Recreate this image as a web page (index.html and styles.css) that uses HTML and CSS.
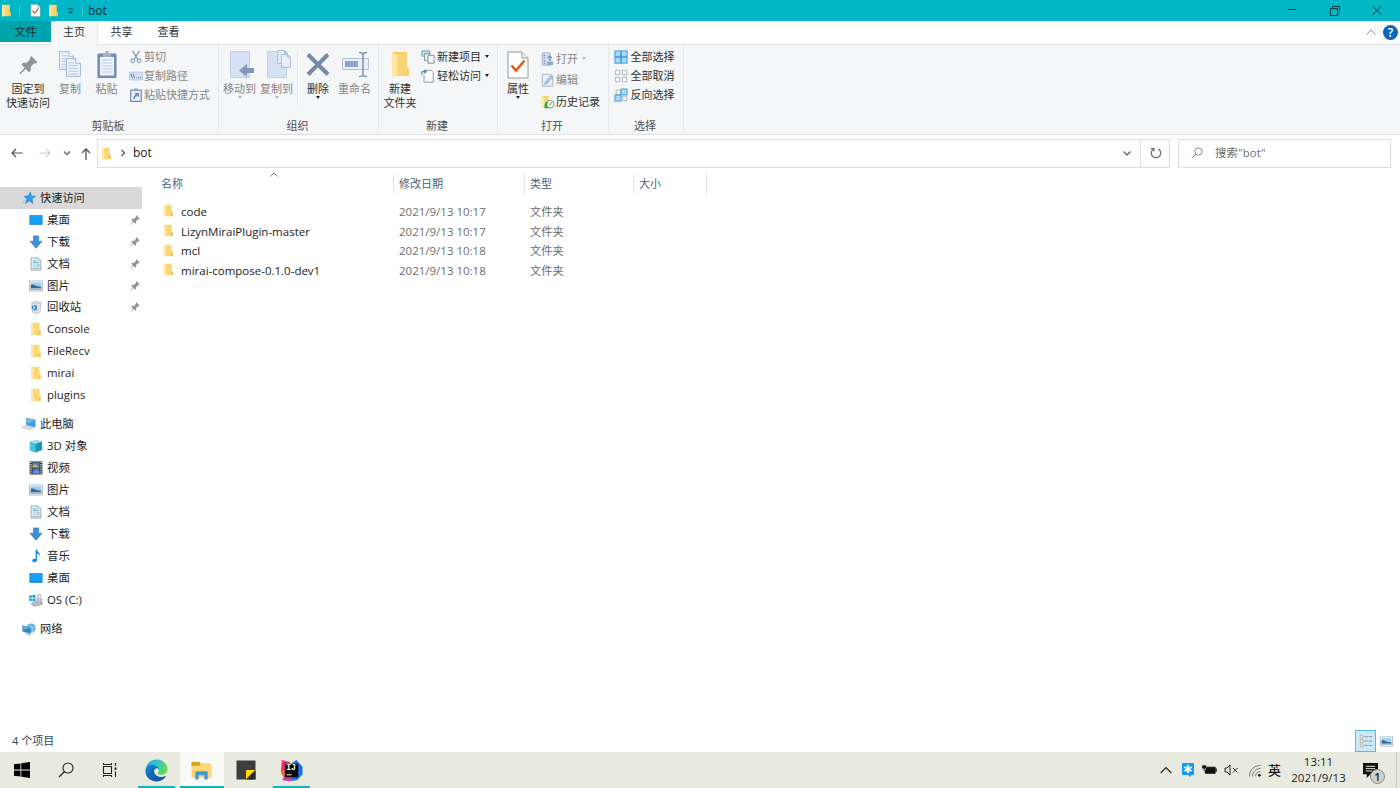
FILE: index.html
```html
<!DOCTYPE html>
<html lang="zh-CN">
<head>
    <meta charset="UTF-8">
    <meta name="viewport" content="width=device-width, initial-scale=1.0">
    <title>bot</title>
    <link rel="stylesheet" href="styles.css">
</head>
<body>
    <!-- Shared icons -->
    <svg class="defs">
        <symbol id="folder" viewBox="0 0 16 16">
            <path d="M2.500 1H12v14H2.500z" fill="#f9d775"/>
            <path d="M2.500 1l2.700 1.500V15H2.500z" fill="#fce9ae"/>
            <path d="M11 10h2.500v5H11z" fill="#f0c55f"/>
        </symbol>
        <symbol id="pin" viewBox="0 0 16 16">
            <path d="M10.300.5L15.500 5.700 14 6.800l-1.200-.2-3 3 .1 2.900-1.500 1.500-2.700-2.700L1 15.700l-.7-.7 4.400-4.700L2 7.600l1.500-1.500 2.900.1 3-3L9.200 2z" fill="#8d949a"/>
        </symbol>
        <symbol id="desktop" viewBox="0 0 16 16">
            <path d="M.5 2.500h15v11H.5z" fill="#1088d8"/>
            <path d="M1.300 3.300h13.400v8.700H1.300z" fill="#16a0f8"/>
        </symbol>
        <symbol id="download" viewBox="0 0 16 16">
            <path d="M5 1h6v6h4l-7 8-7-8h4z" fill="#3b8fdd" stroke="#2a73bd" stroke-width=".6"/>
        </symbol>
        <symbol id="document" viewBox="0 0 16 16">
            <path d="M2.500 1h8l3 3v11h-11z" fill="#e9f0f4" stroke="#8b989f" stroke-width=".9"/>
            <path d="M10.500 1v3h3" fill="#fff" stroke="#8b989f" stroke-width=".8"/>
            <path d="M4.500 4.500h4M4.500 6.500h7M9 9h3" stroke="#4bacda" stroke-width="1.100"/>
            <path d="M4.500 8.500h3.500v4H4.500z" fill="#b9dcf0"/>
            <path d="M9 11h3M4 13.200h8" stroke="#94a7b2" stroke-width=".9"/>
        </symbol>
        <symbol id="picture" viewBox="0 0 16 16">
            <path d="M.6 2.300h14.800v11.400H.6z" fill="#fff" stroke="#a0aab2" stroke-width=".9"/>
            <path d="M2 3.800h12v8.400H2z" fill="#9bd0f3"/>
            <path d="M2 6.500c4-1 5 2.500 12 2.300v3.400H2z" fill="#36688f"/>
            <path d="M2 10.500h12v1.700H2z" fill="#b8cfdd"/>
        </symbol>
        <symbol id="recycle" viewBox="0 0 16 16">
            <path d="M3 3l5-2 6 2-1.500 11L8 15.500 4 14z" fill="#dde3e8" stroke="#afb9c1" stroke-width=".7"/>
            <path d="M3 3l6 1.500L14 3M9 4.500v10.500" fill="none" stroke="#b8c1c9" stroke-width=".8"/>
            <circle cx="6" cy="8.800" r="2.200" fill="none" stroke="#2682d2" stroke-width="1.800" stroke-dasharray="3.700 .9"/>
        </symbol>
        <symbol id="star" viewBox="0 0 16 16">
            <path d="M9.500 1l1.300 4.600 5 .3-4.200 3 1 5.300-4.100-2.900-4.500 2.900 1.800-5.200-3.600-3 4.800-.3z" fill="#2ea0ea" stroke="#1878c0" stroke-width=".5"/>
            <path d="M1 12l3-2M0 14.500l3.500-2" stroke="#8ebfe4" stroke-width=".8"/>
        </symbol>
        <symbol id="pc" viewBox="0 0 16 16">
            <path d="M5 1.500l10 2V11.500L5 9z" fill="#3ba5e8" stroke="#5580a4" stroke-width=".7"/>
            <path d="M5.500 2l8.500 2L6 7z" fill="#69c3f4"/>
            <path d="M0 12l5-1.500 8 2-4.500 2z" fill="#dfe5e9" stroke="#a0a9b0" stroke-width=".6"/>
        </symbol>
        <symbol id="cube" viewBox="0 0 16 16">
            <path d="M1 3.500L8.500 1 15 3v9.500L7.500 15.500 1 13z" fill="#1b94b6"/>
            <path d="M1 3.500L8.500 1 15 3 7.500 5.500z" fill="#a2e6ee"/>
            <path d="M1 3.500l6.500 2v10L1 13z" fill="#45c7dc"/>
        </symbol>
        <symbol id="video" viewBox="0 0 16 16">
            <path d="M.7.500h14.600v15H.7z" fill="#3a3d42"/>
            <path d="M4 1.500h8v6H4z" fill="#4778b8"/>
            <path d="M4 5l3-2 5 4.500H4z" fill="#caa84d"/>
            <path d="M4 8.500h8v6H4z" fill="#3c6cb8"/>
            <path d="M5 12l4-3 3 3v2.500H5z" fill="#628ed0"/>
            <path d="M2.300 1v14M13.700 1v14" stroke="#e4e4e4" stroke-width="1.400" stroke-dasharray="1.400 1.100"/>
        </symbol>
        <symbol id="music" viewBox="0 0 16 16">
            <path d="M7.500.5H9c.2 2.500 4.500 3.700 3.200 8-.3-2-1.500-2.700-3-3v7c0 3.200-5.500 3.500-5.500.8 0-1.900 2.200-2.500 3.800-1.900z" fill="#1890e8"/>
        </symbol>
        <symbol id="drive" viewBox="0 0 16 16">
            <path d="M0 3l3.300-.5v3H0zM3.900 2.400L7.500 2v3.500H3.900zM0 6.200h3.300v3L0 8.800zM3.900 6.200h3.600v3.500l-3.600-.4z" fill="#14a3e8"/>
            <path d="M3 11.500l9-2 3 1.500v2l-9 2-3-1.500z" fill="#b7bec4" stroke="#7f888f" stroke-width=".6"/>
            <path d="M10 6V4.200c0-3 3.600-3 3.600 0" fill="none" stroke="#a6abb0" stroke-width="1.200"/>
            <path d="M9 5.800h6v5H9z" fill="#c1c6ca" stroke="#989fa5" stroke-width=".5"/>
        </symbol>
        <symbol id="network" viewBox="0 0 16 16">
            <circle cx="10.300" cy="7" r="5.300" fill="#62afd9"/>
            <path d="M8 2.500c3 2 5 5 4 9M6 6h9" stroke="#b7def1" fill="none" stroke-width=".8"/>
            <path d="M.5 4l9 2.500v7L.5 10.500z" fill="#1d88cd" stroke="#7393a8" stroke-width=".6"/>
            <path d="M1 4.500l8 2.300L1.500 9z" fill="#53b5ec"/>
            <path d="M4 13l5 2 1.500-1" stroke="#9ea9b1" fill="none"/>
        </symbol>
        <symbol id="check-page" viewBox="0 0 22 28">
            <path d="M1 1h14l6 6v20H1z" fill="#fff" stroke="#92979c"/>
            <path d="M15 1v6h6" fill="#f0f2f4" stroke="#92979c"/>
            <path d="M4.500 14.500l4.500 5 8.500-10" fill="none" stroke="#e35a1c" stroke-width="2.600"/>
        </symbol>
        <symbol id="page-lines" viewBox="0 0 16 20">
            <path d="M.5.500h10l5 5v14H.5z" fill="#eaf1fb" stroke="#a1b3d2"/>
            <path d="M10.500.500v5h5" fill="#fff" stroke="#a1b3d2"/>
            <path d="M3 5h6M3 8h10M3 11h10M3 14h10M3 17h10" stroke="#b4c5e0"/>
        </symbol>
        <symbol id="page-small" viewBox="0 0 11 15">
            <path d="M.5.500h7l3 3v11H.5z" fill="#e8effa" stroke="#a1b3d2"/>
            <path d="M7.500.500v3h3" fill="none" stroke="#a1b3d2"/>
        </symbol>
    </svg>

    <div class="titlebar">
        <svg class="tb-folder"><use href="#folder"/></svg>
        <i class="tb-line"></i>
        <svg class="tb-check"><use href="#check-page"/></svg>
        <svg class="tb-folder second"><use href="#folder"/></svg>
        <svg class="tb-caret" viewBox="0 0 7 7"><path d="M1 1h5" stroke="#123c40"/><path d="M1 3.500h5L3.500 6z" fill="#123c40"/></svg>
        <i class="tb-line last"></i>
        <span class="tb-title">bot</span>
        <div class="window-buttons">
            <svg viewBox="0 0 12 12"><path d="M1.500 4.500h9" stroke="#073b40"/></svg>
            <svg viewBox="0 0 12 12"><path d="M1.500 3.500h7v7h-7zM3.500 3.500v-2h7v7h-2" fill="none" stroke="#073b40"/></svg>
            <svg viewBox="0 0 12 12"><path d="M1.500 1l9 9M10.500 1l-9 9" stroke="#073b40"/></svg>
        </div>
    </div>

    <div class="tabs">
        <span class="tab file">文件</span>
        <span class="tab active">主页</span>
        <span class="tab">共享</span>
        <span class="tab">查看</span>
        <svg class="collapse" viewBox="0 0 10 6"><path d="M.5 5.500L5 1l4.500 4.500" fill="none" stroke="#8d9398"/></svg>
        <span class="help">?</span>
    </div>

    <div class="ribbon">
        <div class="group clipboard">
            <div class="tools">
                <div class="big pin-btn">
                    <svg class="pin-icon"><use href="#pin"/></svg>
                    <span>固定到<br>快速访问</span>
                </div>
                <div class="big copy-btn off">
                    <svg viewBox="0 0 24 28"><use href="#page-lines" x="1" y="0" width="15" height="19"/><use href="#page-lines" x="8" y="7" width="15" height="19"/></svg>
                    <span>复制</span>
                </div>
                <div class="big paste-btn off">
                    <svg viewBox="0 0 24 28"><path d="M3 3h18v23.500H3z" fill="#7891bd" stroke="#6a82ae"/><path d="M5 6h14v18.500H5z" fill="#eef4fc"/><path d="M7 9h10M7 12h10M7 15h10M7 18h10M7 21h10" stroke="#c0d0e6"/><path d="M8 2.500h2.500V0h3v2.500H16V6H8z" fill="#a2b1c8"/></svg>
                    <span>粘贴</span>
                </div>
                <div class="small-list">
                    <div class="small off"><svg viewBox="0 0 16 16"><path d="M4 1l5.500 9M12 1L6.500 10" stroke="#8191aa" stroke-width="1.300"/><circle cx="4.500" cy="12.300" r="2.200" fill="none" stroke="#8ca1c5" stroke-width="1.300"/><circle cx="11.500" cy="12.300" r="2.200" fill="none" stroke="#8ca1c5" stroke-width="1.300"/></svg>剪切</div>
                    <div class="small off"><svg viewBox="0 0 16 16"><path d="M.5 3.500h15v9H.5z" fill="#d5e0f2" stroke="#b7c6df"/><path d="M2 5.500l2 5M4.500 5.500l2 5M8 10h1.300M10.300 10h1.300M12.600 10h1.300" stroke="#5e739d"/></svg>复制路径</div>
                    <div class="small off"><svg viewBox="0 0 16 16"><path d="M2 2.500h12v12.800H2z" fill="#e8f0fa" stroke="#728db6" stroke-width="1.400"/><path d="M6 .5h4v3H6z" fill="#8ca0bf"/><path d="M5.800 12.500c0-3 1-4 3.500-4M7 6.500h3.500V10" fill="none" stroke="#4c72ad" stroke-width="1.500"/></svg>粘贴快捷方式</div>
                </div>
            </div>
            <div class="group-name">剪贴板</div>
        </div>

        <div class="group organize">
            <div class="tools">
                <div class="big move-btn off">
                    <svg viewBox="0 0 24 28"><path d="M2.500.500h19v26h-19z" fill="#d5e0f3" stroke="#c3d1e9"/><path d="M26 17v5h-7v4l-8-6.500 8-6.500v4z" fill="#8297bb"/></svg>
                    <span>移动到</span><i class="caret"></i>
                </div>
                <div class="big move-btn off">
                    <svg viewBox="0 0 24 28"><path d="M2.500.500h19v26h-19z" fill="#d5e0f3" stroke="#c3d1e9"/><use href="#page-small" x="12" y="-1" width="11" height="14"/><use href="#page-small" x="16" y="3" width="10" height="14"/></svg>
                    <span>复制到</span><i class="caret"></i>
                </div>
                <i class="divider"></i>
                <div class="big delete-btn">
                    <svg viewBox="0 0 24 28"><path d="M2 3.500l20 20M22 3.500l-20 20" stroke="#7888a8" stroke-width="4"/></svg>
                    <span>删除</span><i class="caret"></i>
                </div>
                <div class="big rename-btn off">
                    <svg class="wide" viewBox="0 0 28 28"><path d="M1.500 7.500h26v11h-26z" fill="#e9f0fa" stroke="#b2c1d9"/><path d="M4 10h13v6H4z" fill="#8ea5cb"/><path d="M18 1.500c3 0 4 .5 4 2v20c0 1.500-1 2-4 2M26 1.500c-3 0-4 .5-4 2M26 25.500c-3 0-4-.5-4-2" fill="none" stroke="#8596b3" stroke-width="1.600"/></svg>
                    <span>重命名</span>
                </div>
            </div>
            <div class="group-name">组织</div>
        </div>

        <div class="group new">
            <div class="tools">
                <div class="big new-folder">
                    <svg viewBox="0 0 24 28"><path d="M4 1h15v16h2v8H4z" fill="#f5cd65"/><path d="M4 1l5 3v22l-5-1.500z" fill="#ffe6a1"/><path d="M9 2.500h10V25H9z" fill="#fad575"/></svg>
                    <span>新建<br>文件夹</span>
                </div>
                <div class="small-list">
                    <div class="small"><svg viewBox="0 0 16 16"><path d="M1 1h9v6H1z" fill="#c4e2ef" stroke="#6b98ad"/><path d="M4 4h6v8H4z" fill="#e6f0f4" stroke="#7c929c"/><path d="M8 6h7v9H8z" fill="#f6f8f9" stroke="#7c8589"/></svg>新建项目<i class="caret"></i></div>
                    <div class="small"><svg viewBox="0 0 16 16"><path d="M4.500 1.500h7l2.500 2.500v11H3.500V7" fill="#fff" stroke="#838b91"/><path d="M.5 7l1-4h4M3.500 1L6 3 3.500 5" fill="none" stroke="#4688c2" stroke-width="1.300"/></svg>轻松访问<i class="caret"></i></div>
                </div>
            </div>
            <div class="group-name">新建</div>
        </div>

        <div class="group open">
            <div class="tools">
                <div class="big props-btn">
                    <svg><use href="#check-page"/></svg>
                    <span>属性</span><i class="caret"></i>
                </div>
                <div class="small-list">
                    <div class="small off"><svg viewBox="0 0 16 16"><path d="M1.500 1h9v14h-9z" fill="#d6e1f2" stroke="#9aabc8"/><path d="M3 4h2M3 7h2M3 10h2M3 13h2" stroke="#8498ba" stroke-width="1.500"/><path d="M10 10V5M7.500 7L10 4.500 12.500 7" stroke="#7f94ba" fill="none" stroke-width="1.500"/><path d="M7 11h7v4H7z" fill="#8fa4c8"/></svg>打开<i class="caret"></i></div>
                    <div class="small off"><svg viewBox="0 0 16 16"><path d="M1.500 1.500h9L13.500 5v10h-12z" fill="#e8effa" stroke="#9fb0cc"/><path d="M4 13l1-3 7-8 2 2-7 8z" fill="#b0c1de" stroke="#8da3c8" stroke-width=".7"/></svg>编辑</div>
                    <div class="small"><svg viewBox="0 0 16 16"><path d="M1 1h8v14H1z" fill="#f7d774"/><path d="M1 1l3 2v12l-3-1z" fill="#ffe9a8"/><circle cx="10.500" cy="10.500" r="4.500" fill="#edf4ec" stroke="#829184"/><path d="M10 11.500l2-3" stroke="#66756a" fill="none"/><path d="M4 10v5h5.500l-1.500-1.500c-1.500-1-1.500-3 0-4.500L6 7.500c-1 1-1.500 2-1.500 3z" fill="#36a543"/></svg>历史记录</div>
                </div>
            </div>
            <div class="group-name">打开</div>
        </div>

        <div class="group select">
            <div class="tools">
                <div class="small-list">
                    <div class="small"><svg viewBox="0 0 16 16"><path d="M1 1h7v7H1zM8 1h7v7H8zM1 8h7v7H1zM8 8h7v7H8z" fill="#a9d9f8" stroke="#3195d9"/></svg>全部选择</div>
                    <div class="small"><svg viewBox="0 0 16 16"><path d="M1.500 1.500h5v5h-5zM9.500 1.500h5v5h-5zM1.500 9.500h5v5h-5zM9.500 9.500h5v5h-5z" fill="#fff" stroke="#a5a9ad"/></svg>全部取消</div>
                    <div class="small"><svg viewBox="0 0 16 16"><path d="M2.500 2.500h5v5h-5zM9.500 9.500h5v5h-5z" fill="#fff" stroke="#9dadb9"/><path d="M8 1h7v7H8zM1 8h7v7H1z" fill="#a9d9f8" stroke="#3a99d9"/></svg>反向选择</div>
                </div>
            </div>
            <div class="group-name">选择</div>
        </div>
    </div>

    <div class="address-row">
        <div class="nav-arrows">
            <svg viewBox="0 0 12 12"><path d="M11.500 6H1M5 2L1 6l4 4" fill="none" stroke="#555" stroke-width="1.200"/></svg>
            <svg viewBox="0 0 12 12"><path d="M.5 6H11M7 2l4 4-4 4" fill="none" stroke="#cfcfcf" stroke-width="1.200"/></svg>
            <svg class="tiny" viewBox="0 0 8 8"><path d="M1 2.500l3 3 3-3" fill="none" stroke="#666" stroke-width="1.300"/></svg>
            <svg class="up" viewBox="0 0 12 12"><path d="M6 12V1M2 5l4-4 4 4" fill="none" stroke="#555" stroke-width="1.300"/></svg>
        </div>
        <div class="address">
            <svg class="addr-folder"><use href="#folder"/></svg>
            <svg class="addr-arrow" viewBox="0 0 8 8"><path d="M2.500 1l3 3-3 3" fill="none" stroke="#555" stroke-width="1.200"/></svg>
            <span>bot</span>
            <svg class="addr-down" viewBox="0 0 10 10"><path d="M1.500 3.500L5 7l3.500-3.500" fill="none" stroke="#666" stroke-width="1.400"/></svg>
        </div>
        <div class="refresh">
            <svg viewBox="0 0 12 12"><path d="M8.500 2a4.700 4.700 0 1 1-5 0M1 1.500h3v3" fill="none" stroke="#6b6b6b" stroke-width="1.200"/></svg>
        </div>
        <div class="search">
            <svg viewBox="0 0 12 12"><circle cx="7.500" cy="4.500" r="3.600" fill="none" stroke="#888"/><path d="M5 7L.8 11.200" stroke="#888"/></svg>
            <span>搜索"bot"</span>
        </div>
    </div>

    <div class="main">
        <div class="sidebar">
            <div class="nav-section">
                <div class="nav-item root selected"><svg><use href="#star"/></svg>快速访问</div>
                <div class="nav-item"><svg><use href="#desktop"/></svg>桌面<svg class="pinned"><use href="#pin"/></svg></div>
                <div class="nav-item"><svg><use href="#download"/></svg>下载<svg class="pinned"><use href="#pin"/></svg></div>
                <div class="nav-item"><svg><use href="#document"/></svg>文档<svg class="pinned"><use href="#pin"/></svg></div>
                <div class="nav-item"><svg><use href="#picture"/></svg>图片<svg class="pinned"><use href="#pin"/></svg></div>
                <div class="nav-item"><svg><use href="#recycle"/></svg>回收站<svg class="pinned"><use href="#pin"/></svg></div>
                <div class="nav-item"><svg><use href="#folder"/></svg>Console</div>
                <div class="nav-item"><svg><use href="#folder"/></svg>FileRecv</div>
                <div class="nav-item"><svg><use href="#folder"/></svg>mirai</div>
                <div class="nav-item"><svg><use href="#folder"/></svg>plugins</div>
            </div>
            <div class="nav-section">
                <div class="nav-item root"><svg><use href="#pc"/></svg>此电脑</div>
                <div class="nav-item"><svg><use href="#cube"/></svg>3D 对象</div>
                <div class="nav-item"><svg><use href="#video"/></svg>视频</div>
                <div class="nav-item"><svg><use href="#picture"/></svg>图片</div>
                <div class="nav-item"><svg><use href="#document"/></svg>文档</div>
                <div class="nav-item"><svg><use href="#download"/></svg>下载</div>
                <div class="nav-item"><svg><use href="#music"/></svg>音乐</div>
                <div class="nav-item"><svg><use href="#desktop"/></svg>桌面</div>
                <div class="nav-item"><svg><use href="#drive"/></svg>OS (C:)</div>
            </div>
            <div class="nav-section">
                <div class="nav-item root"><svg><use href="#network"/></svg>网络</div>
            </div>
        </div>

        <div class="files">
            <div class="file-header">
                <span class="col-name">名称<svg class="sort" viewBox="0 0 8 5"><path d="M.5 4.500L4 1l3.500 3.500" fill="none" stroke="#777"/></svg></span>
                <span class="col-date">修改日期</span>
                <span class="col-type">类型</span>
                <span class="col-size">大小</span>
            </div>
            <div class="file-row">
                <span class="col-name"><svg><use href="#folder"/></svg>code</span>
                <span class="col-date">2021/9/13 10:17</span>
                <span class="col-type">文件夹</span>
            </div>
            <div class="file-row">
                <span class="col-name"><svg><use href="#folder"/></svg>LizynMiraiPlugin-master</span>
                <span class="col-date">2021/9/13 10:17</span>
                <span class="col-type">文件夹</span>
            </div>
            <div class="file-row">
                <span class="col-name"><svg><use href="#folder"/></svg>mcl</span>
                <span class="col-date">2021/9/13 10:18</span>
                <span class="col-type">文件夹</span>
            </div>
            <div class="file-row">
                <span class="col-name"><svg><use href="#folder"/></svg>mirai-compose-0.1.0-dev1</span>
                <span class="col-date">2021/9/13 10:18</span>
                <span class="col-type">文件夹</span>
            </div>
        </div>
    </div>

    <div class="statusbar">
        <span>4 个项目</span>
        <div class="views">
            <div class="view-details"><svg viewBox="0 0 16 16"><path d="M1.500 1.500h3v3h-3zM1.500 6.500h3v3h-3zM1.500 11.500h3v3h-3z" fill="#fff" stroke="#a79b91" stroke-width=".8"/><path d="M6 3h4M11 3h4M6 8h4M11 8h4M6 13h4M11 13h4" stroke="#7b8d99"/></svg></div>
            <svg class="view-thumb"><use href="#picture"/></svg>
        </div>
    </div>

    <div class="taskbar">
        <div class="task start"><svg viewBox="0 0 16 16"><path d="M0 2.300l6.500-.9v6.200H0zM7.300 1.300L16 0v7.600H7.300zM0 8.400h6.500v6.200L0 13.700zM7.300 8.400H16V16l-8.700-1.300z" fill="#000"/></svg></div>
        <div class="task find"><svg viewBox="0 0 16 16"><circle cx="10" cy="6" r="5" fill="none" stroke="#222" stroke-width="1.100"/><path d="M6.500 9.500L1 15" stroke="#222" stroke-width="1.200"/></svg></div>
        <div class="task view"><svg viewBox="0 0 16 16"><path d="M1.500 4.500h8v7h-8zM1.500 1v1.500h8V1M1.500 15v-1.500h8V15M13.500 1v3M13.500 9.500V15" fill="none" stroke="#222" stroke-width="1.100"/><path d="M12.500 5.500h2v2.300h-2z" fill="#222"/></svg></div>
        <div class="task edge running">
            <svg viewBox="0 0 24 24">
                <defs>
                    <linearGradient id="edge-top" x1="0" y1="0" x2="1" y2=".3"><stop offset="0" stop-color="#1c9fe0"/><stop offset=".5" stop-color="#2cc1d2"/><stop offset="1" stop-color="#62d957"/></linearGradient>
                    <linearGradient id="edge-low" x1="0" y1="0" x2="1" y2="1"><stop offset="0" stop-color="#1689d6"/><stop offset="1" stop-color="#0c4b96"/></linearGradient>
                </defs>
                <path d="M.5 12C1 5 6 .5 12 .5c7 0 11.500 5 11.500 10 0 4-3 6-6.500 6-3 0-4.500-1.200-3.400-2.500 1.400-1.800.6-4.500-2.600-5.500C7 7 2 8 .5 12z" fill="url(#edge-top)"/>
                <path d="M.5 12C1.500 7.500 5 6 8.500 6.300c3 .2 5.200 1.800 5.900 4-2.500-1.500-5 .2-5 3 0 4 5.500 8 12.600 4.500-2 3.500-5.500 5.700-10 5.700C5 23.500 0 18 .5 12z" fill="url(#edge-low)"/>
                <path d="M6.500 14c0-2.500 2-5 5-5.300-2 1-2.600 2.800-2.100 4.900 1 3.900 5.900 6.900 12.600 4.200-2 3-6 4.200-9.500 3.200-3.500-1-6-3.800-6-7z" fill="#0f5fae"/>
            </svg>
        </div>
        <div class="task explorer running">
            <svg viewBox="0 0 22 20"><path d="M.5 1h8.500l1.500 2.500v2H.5z" fill="#dba224"/><path d="M10 2.500h10.500v4H10z" fill="#f7d06a"/><path d="M.5 5h8l2-1.500h11V18H.5z" fill="#fbd873"/><path d="M4.500 19.500V12c0-.8.500-1.300 1.300-1.300h10.400c.8 0 1.300.5 1.300 1.300v7.500h-3.500V15H8v4.500z" fill="#4497cf"/></svg>
        </div>
        <div class="task notes"><svg viewBox="0 0 20 20"><path d="M.5.500h19v19H.5z" fill="#3c3d3e"/><path d="M10 10h9.500L10 19.500z" fill="#ffd900"/><path d="M19.500 10v9.500H10z" fill="#29292a"/></svg></div>
        <div class="task idea running">
            <svg viewBox="0 0 24 24"><path d="M2 1l8 2 2 7-6 7-5-4z" fill="#ef2e76"/><path d="M.5 13l7-3 4 8-7 3z" fill="#f46c3a"/><path d="M13 4l4-3 6.500 7v8L18 22l-6 1-3-5z" fill="#1b6fe5"/><path d="M2 22l5-6 7 6-4 1.500z" fill="#d03d9b"/><path d="M5 5h14v14H5z" fill="#050505"/><path d="M7 16.500h5" stroke="#fff" stroke-width="1"/><text class="idea-text" x="6.500" y="12">IJ</text></svg>
        </div>
        <div class="tray">
            <svg class="tray-up" viewBox="0 0 12 8"><path d="M.7 7L6 1.500 11.300 7" fill="none" stroke="#222" stroke-width="1.200"/></svg>
            <svg class="tray-star" viewBox="0 0 12 14"><path d="M1 0h10c.6 0 1 .4 1 1v10c0 .6-.4 1-1 1H9.500l-1 2-2.500-2H1c-.6 0-1-.4-1-1V1c0-.6.400-1 1-1z" fill="#12a0f2"/><path d="M6 2v8M2.500 4l7 4M9.500 4l-7 4" stroke="#fff" stroke-width="1.900"/></svg>
            <svg class="tray-battery" viewBox="0 0 16 12"><path d="M5 3h9v6.500H3.500V6" fill="#111" stroke="#111"/><path d="M14.500 4.500h1.200V8h-1.200z" fill="#111"/><path d="M.5 1.500h3.700v2.500H.5zM2.300 4v3" stroke="#111" fill="#111" stroke-width=".8"/></svg>
            <svg class="tray-sound" viewBox="0 0 15 12"><path d="M1 4h2l3-3v10L3 8H1z" fill="none" stroke="#222"/><path d="M9 4l4.500 4.500M13.500 4L9 8.500" stroke="#222"/></svg>
            <svg class="tray-wifi" viewBox="0 0 12 12"><path d="M.5 11.500C.5 5 5 .5 11.500.5M3.500 11.500c0-4.500 3.500-8 8-8M6.500 11.500c0-3 2-5 5-5" fill="none" stroke="#777"/><circle cx="10.300" cy="10.300" r="1.400" fill="#222"/></svg>
            <span class="lang">英</span>
            <div class="clock"><span>13:11</span><span>2021/9/13</span></div>
            <div class="notice">
                <svg viewBox="0 0 16 16"><path d="M0 0h16v12H8l-4 4v-4H0z" fill="#111"/><path d="M3 3.500h10M3 6h10M3 8.500h7" stroke="#eceee3"/></svg>
                <span class="badge">1</span>
            </div>
            <i class="show-desktop"></i>
        </div>
    </div>
</body>
</html>
```
FILE: styles.css
```css
* {
    box-sizing: border-box;
}
body {
    margin: 0;
    width: 1400px;
    height: 788px;
    display: flex;
    flex-direction: column;
    overflow: hidden;
    font-family: "Open Sans", "Noto Sans CJK SC", sans-serif;
    font-size: 11px;
    line-height: 14px;
    color: #1c1c1c;
    background-color: #ffffff;
}
svg {
    display: block;
    flex: none;
    overflow: visible;
}
.defs {
    display: none;
}

/* Title bar */
.titlebar {
    height: 21px;
    display: flex;
    align-items: center;
    flex: none;
    background-color: #00b7c7;
}
.tb-folder {
    width: 13px;
    height: 13px;
}
.tb-folder.second {
    margin-left: 6px;
}
.tb-line {
    width: 1px;
    height: 12px;
    margin-left: 6px;
    background-color: #49bfc8;
}
.tb-check {
    width: 11px;
    height: 13px;
    margin-left: 10px;
}
.tb-caret {
    width: 7px;
    height: 7px;
    margin-left: 7px;
    margin-top: 2px;
}
.tb-line.last {
    margin-left: 8px;
}
.tb-title {
    margin-left: 5px;
    font-size: 12px;
    color: #082c30;
}
.window-buttons {
    margin-left: auto;
    display: flex;
    gap: 30.5px;
    padding-right: 17px;
}
.window-buttons svg {
    width: 12px;
    height: 12px;
}

/* Tabs */
.tabs {
    height: 24px;
    display: flex;
    flex: none;
    position: relative;
    border-bottom: 1px solid #e3e5e7;
}
.tab {
    width: 47px;
    height: 23px;
    line-height: 22px;
    text-align: center;
    color: #333333;
}
.tab.file {
    width: 51px;
    height: 21px;
    background-color: #00a4ac;
    color: #062c2e;
}
.tab.active {
    height: 24px;
    background-color: #f4f6f8;
    border-right: 1px solid #e7e9eb;
}
.collapse {
    width: 10px;
    height: 6px;
    margin: 8px 7px 0 auto;
}
.help {
    width: 15px;
    height: 15px;
    margin: 4px 2px 0 0;
    border-radius: 50%;
    background-color: #0967bd;
    color: #ffffff;
    font-size: 12px;
    font-weight: 600;
    line-height: 15px;
    text-align: center;
}

/* Ribbon */
.ribbon {
    height: 90px;
    display: flex;
    flex: none;
    background-color: #f4f6f8;
    border-bottom: 1px solid #dfe1e3;
    color: #303030;
}
.group {
    display: flex;
    flex-direction: column;
    justify-content: space-between;
    padding: 2px 0 1.5px;
    border-right: 1px solid #e5e7ea;
}
.clipboard {
    width: 219px;
}
.organize {
    width: 160px;
}
.new {
    width: 119px;
}
.open {
    width: 111px;
}
.select {
    width: 75px;
}
.tools {
    display: flex;
}
.group-name {
    padding-right: 2px;
    text-align: center;
    color: #505050;
}
.big {
    display: flex;
    flex-direction: column;
    align-items: center;
    padding-top: 4px;
    text-align: center;
    white-space: nowrap;
    line-height: 14.5px;
}
.big svg {
    width: 24px;
    height: 28px;
    margin-bottom: 2.5px;
}
.big .pin-icon {
    width: 19px;
}
.big .wide {
    width: 28px;
}
.pin-btn {
    width: 56px;
}
.copy-btn {
    width: 28px;
}
.paste-btn {
    width: 45px;
}
.organize .tools {
    padding-left: 2px;
}
.move-btn, .delete-btn {
    width: 37px;
}
.delete-btn {
    width: 36px;
}
.rename-btn {
    width: 37px;
}
.divider {
    width: 1px;
    height: 54px;
    margin: 4px 2px 0;
    background-color: #e5e7ea;
}
.new-folder {
    width: 42px;
}
.props-btn {
    width: 43px;
    padding-right: 3px;
}
.big.props-btn svg {
    width: 22px;
}
.off {
    color: #858585;
}
.caret {
    width: 0;
    height: 0;
    border: 2.5px solid transparent;
    border-top: 3px solid #222222;
    border-bottom: none;
}
.off .caret {
    border-top-color: #b5b5b5;
}
.small {
    height: 19px;
    display: flex;
    align-items: center;
    white-space: nowrap;
}
.small svg {
    width: 14px;
    height: 14px;
    margin-right: 1px;
}
.small .caret {
    margin-left: 4px;
}
.new .small svg {
    margin-right: 2px;
}
.open .small-list {
    padding-top: 1px;
}
.open .small {
    height: 21.5px;
}
.select .small-list {
    padding-left: 5px;
}
.select .small svg {
    margin-right: 2.5px;
}

/* Address bar */
.address-row {
    height: 36px;
    display: flex;
    align-items: center;
    flex: none;
}
.nav-arrows {
    width: 97px;
    display: flex;
    align-items: center;
    padding-left: 11px;
}
.nav-arrows svg {
    width: 12px;
    height: 12px;
    margin-right: 16px;
}
.nav-arrows .tiny {
    width: 8px;
    height: 8px;
    margin: 0 9px 0 -4px;
}
.nav-arrows .up {
    margin: 2px 0 0;
}
.address, .refresh, .search {
    height: 29px;
    display: flex;
    align-items: center;
    border: 1px solid #dedede;
}
.address {
    width: 1044px;
    font-size: 12px;
}
.addr-folder {
    width: 13px;
    height: 13px;
    margin-left: 2px;
}
.addr-arrow {
    width: 8px;
    height: 8px;
    margin: 0 6px 0 6px;
}
.addr-down {
    width: 10px;
    height: 10px;
    margin: 0 8px 0 auto;
}
.refresh {
    width: 29px;
    justify-content: center;
    border-left: none;
}
.refresh svg {
    width: 12px;
    height: 12px;
    margin-left: 1px;
}
.search {
    width: 213px;
    margin-left: 8px;
    padding-left: 12px;
    font-size: 11.3px;
    letter-spacing: 0.2px;
    color: #6e6e6e;
}
.search svg {
    width: 12px;
    height: 12px;
    margin-right: 12px;
}

/* Navigation pane and file list */
.main {
    flex: 1;
    display: flex;
}
.sidebar {
    width: 142px;
    padding-top: 16px;
}
.nav-section {
    margin-bottom: 7.6px;
}
.nav-item {
    height: 21.9px;
    display: flex;
    align-items: center;
    padding-left: 29px;
    font-size: 11.4px;
}
.nav-item svg {
    width: 14px;
    height: 14px;
    margin-right: 4px;
}
.nav-item.root {
    padding-left: 22px;
    font-size: 11.2px;
}
.nav-item.selected {
    background-color: #d9d9d9;
}
.nav-item .pinned {
    width: 10px;
    height: 10px;
    margin: 0 2px 0 auto;
}
.files {
    padding: 2px 0 0 19px;
}
.file-header, .file-row {
    display: flex;
    align-items: center;
}
.file-header {
    height: 22px;
    margin-bottom: 7px;
    color: #4c607a;
}
.file-header span {
    height: 22px;
    line-height: 22px;
    border-right: 1px solid #e5e5e5;
}
.file-row {
    height: 19.7px;
    font-size: 11.5px;
    color: #6d6d6d;
}
.col-name {
    width: 233px;
    display: flex;
    align-items: center;
    position: relative;
}
.file-row .col-name {
    color: #1c1c1c;
    padding-left: 1px;
}
.file-row svg {
    width: 13px;
    height: 13px;
    margin: -2px 6px 0 0;
}
.sort {
    position: absolute;
    left: 109px;
    top: -1px;
    width: 8px;
    height: 5px;
}
.col-date {
    width: 131px;
    padding-left: 5px;
}
.col-type {
    width: 109px;
    padding-left: 5px;
}
.file-row .col-type {
    font-size: 11.2px;
}
.col-size {
    width: 73px;
    padding-left: 5px;
}

/* Status bar */
.statusbar {
    height: 22px;
    display: flex;
    align-items: center;
    justify-content: space-between;
    flex: none;
    padding: 0 7px 0 12px;
    color: #30465f;
}
.views {
    display: flex;
    align-items: center;
    gap: 4px;
}
.view-details {
    width: 21px;
    height: 22px;
    display: flex;
    align-items: center;
    justify-content: center;
    background-color: #cbe9f8;
    border: 1px solid #59b8e4;
}
.view-details svg {
    width: 14px;
    height: 14px;
}
.view-thumb {
    width: 13px;
    height: 13px;
}

/* Taskbar */
.taskbar {
    height: 36px;
    display: flex;
    flex: none;
    background-color: #e9eadf;
}
.task {
    width: 44px;
    display: flex;
    align-items: center;
    justify-content: center;
}
.task svg {
    width: 16px;
    height: 16px;
}
.task.view {
    width: 43px;
}
.running {
    border-bottom: 2px solid #13b2bc;
    padding-top: 2px;
}
.task.edge {
    width: 37px;
    margin-left: 7px;
}
.task.edge svg {
    width: 23px;
    height: 23px;
}
.task.explorer {
    width: 44px;
    margin-left: 4.5px;
    background-color: #f9faf5;
}
.task.explorer svg {
    width: 21px;
    height: 19px;
}
.task.notes svg {
    width: 20px;
    height: 20px;
}
.task.idea {
    width: 37px;
    margin-left: 5px;
}
.task.idea svg {
    width: 23px;
    height: 23px;
}
.idea-text {
    font-family: "Liberation Mono", monospace;
    font-size: 8.5px;
    font-weight: bold;
    fill: #ffffff;
}
.tray {
    margin-left: auto;
    display: flex;
    align-items: center;
}
.tray-up {
    width: 12px;
    height: 8px;
    margin-right: 10px;
}
.tray-star {
    width: 12px;
    height: 14px;
    margin-right: 8px;
}
.tray-battery {
    width: 15px;
    height: 12px;
    margin-right: 7px;
}
.tray-sound {
    width: 15px;
    height: 12px;
    margin-right: 10px;
}
.tray-wifi {
    width: 12px;
    height: 12px;
    margin: 2px 7px 0 0;
}
.lang {
    width: 13px;
    font-size: 13px;
    font-weight: 500;
}
.clock {
    width: 55px;
    margin: 0 17px 0 10px;
    display: flex;
    flex-direction: column;
    align-items: center;
    font-size: 11.5px;
    line-height: 16px;
}
.notice {
    position: relative;
}
.notice svg {
    width: 15px;
    height: 15px;
}
.badge {
    position: absolute;
    left: 7px;
    top: 6px;
    width: 15px;
    height: 15px;
    border: 1px solid #8a8b86;
    border-radius: 50%;
    background-color: #cfd0c8;
    font-size: 11px;
    font-weight: 600;
    line-height: 13px;
    text-align: center;
}
.show-desktop {
    width: 4px;
    height: 36px;
    margin-left: 18px;
    border-left: 1px solid #c9cac0;
}
```
